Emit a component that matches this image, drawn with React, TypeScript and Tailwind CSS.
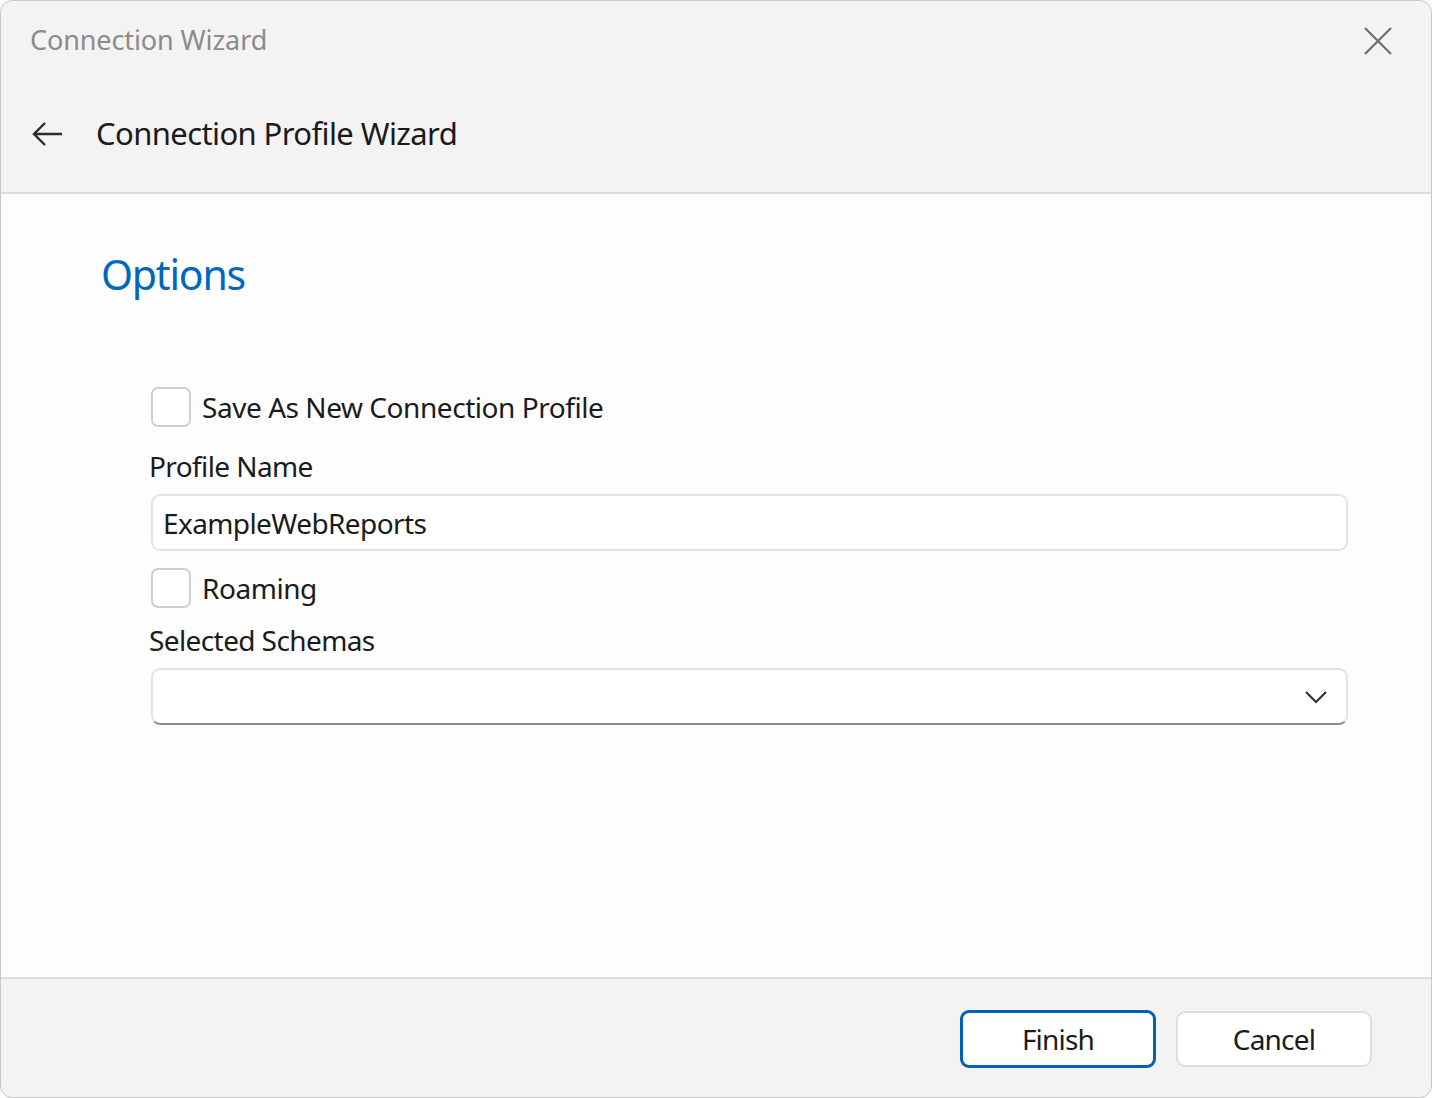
import React, { useState } from "react";

const font = { fontFamily: '"Segoe UI", "Noto Sans", sans-serif' };

function CheckRow({ label, checked, onToggle }: { label: string; checked: boolean; onToggle: () => void }) {
  return (
    <label className="flex items-center gap-[11px] cursor-pointer select-none">
      <span
        onClick={onToggle}
        className={
          checked
            ? "w-[40px] h-[40px] rounded-[7px] border border-[#0067c0] bg-[#0067c0] flex items-center justify-center"
            : "w-[40px] h-[40px] rounded-[7px] border-2 border-[#cfcfcf] bg-white"
        }
      >
        {checked && (
          <svg width="22" height="22" viewBox="0 0 16 16" fill="none" stroke="white" strokeWidth="1.6">
            <path d="M3 8.5l3.2 3L13 4.5" />
          </svg>
        )}
      </span>
      <span className="text-[28px] leading-none text-[#1b1b1b] tracking-[-0.45px]">{label}</span>
    </label>
  );
}

export default function App() {
  const [saveNew, setSaveNew] = useState(false);
  const [roaming, setRoaming] = useState(false);
  const [name, setName] = useState("ExampleWebReports");

  return (
    <div className="w-[1432px] h-[1098px] bg-white" style={font}>
      <div className="w-full h-full flex flex-col rounded-[12px] border border-[#c8c8c8] overflow-hidden bg-[#f3f3f3]">
        {/* title bar */}
        <div className="h-[80px] flex items-start justify-between pl-[29px] pr-[38px] pt-[21px]">
          <span className="text-[27px] leading-[36px] text-[#8b8b8b] tracking-[-0.1px]">Connection Wizard</span>
          <svg width="30" height="30" viewBox="0 0 30 30" className="mt-[4px]" stroke="#6e6e6e" strokeWidth="2.2">
            <path d="M2 2l26 26M28 2L2 28" />
          </svg>
        </div>

        {/* page header */}
        <div className="h-[113px] flex items-center pl-[31px] pb-[6px] border-b-2 border-[#dcdcdc]">
          <svg width="31" height="26" viewBox="0 0 31 26" fill="none" stroke="#2b2b2b" strokeWidth="2.4">
            <path d="M30 13H2M13 2L2 13l11 11" />
          </svg>
          <span className="ml-[33px] text-[31px] leading-none text-[#1a1a1a] tracking-[-0.6px]">Connection Profile Wizard</span>
        </div>

        {/* form */}
        <div className="flex-1 bg-[#fdfdfd] pl-[100px] pr-[83px] pt-[52px]">
          <h1 className="text-[41px] leading-[56px] text-[#0067c0] tracking-[-1.2px]">Options</h1>

          <div className="pl-[50px] mt-[85px] flex flex-col">
            <CheckRow label="Save As New Connection Profile" checked={saveNew} onToggle={() => setSaveNew(!saveNew)} />

            <span className="mt-[25px] ml-[-2px] text-[28px] leading-none text-[#1b1b1b] tracking-[-0.6px]">Profile Name</span>
            <input
              value={name}
              onChange={(e) => setName(e.target.value)}
              className="mt-[14px] h-[57px] w-full rounded-[9px] border-2 border-[#e3e3e3] bg-white px-[10px] text-[28px] text-[#1b1b1b] tracking-[-0.6px] outline-none"
            />

            <div className="mt-[17px]">
              <CheckRow label="Roaming" checked={roaming} onToggle={() => setRoaming(!roaming)} />
            </div>

            <span className="mt-[18px] ml-[-2px] text-[28px] leading-none text-[#1b1b1b] tracking-[-0.6px]">Selected Schemas</span>
            <button className="mt-[14px] h-[57px] w-full rounded-[9px] border-2 border-[#e3e3e3] border-b-[#8a8a8a] bg-white flex items-center justify-end pr-[18px]">
              <svg width="24" height="14" viewBox="0 0 24 14" fill="none" stroke="#333" strokeWidth="2.2">
                <path d="M2 2l10 10L22 2" />
              </svg>
            </button>
          </div>
        </div>

        {/* footer */}
        <div className="h-[120px] border-t-2 border-[#dcdcdc] flex items-start justify-end gap-[20px] pr-[59px] pt-[31px]">
          <button className="w-[196px] h-[58px] rounded-[9px] border-[3px] border-[#0060b8] bg-white text-[28px] text-[#1b1b1b] tracking-[-0.8px]">
            Finish
          </button>
          <button className="w-[196px] h-[56px] mt-[1px] rounded-[9px] border-2 border-[#dedede] bg-white text-[28px] text-[#1b1b1b] tracking-[-0.8px]">
            Cancel
          </button>
        </div>
      </div>
    </div>
  );
}
